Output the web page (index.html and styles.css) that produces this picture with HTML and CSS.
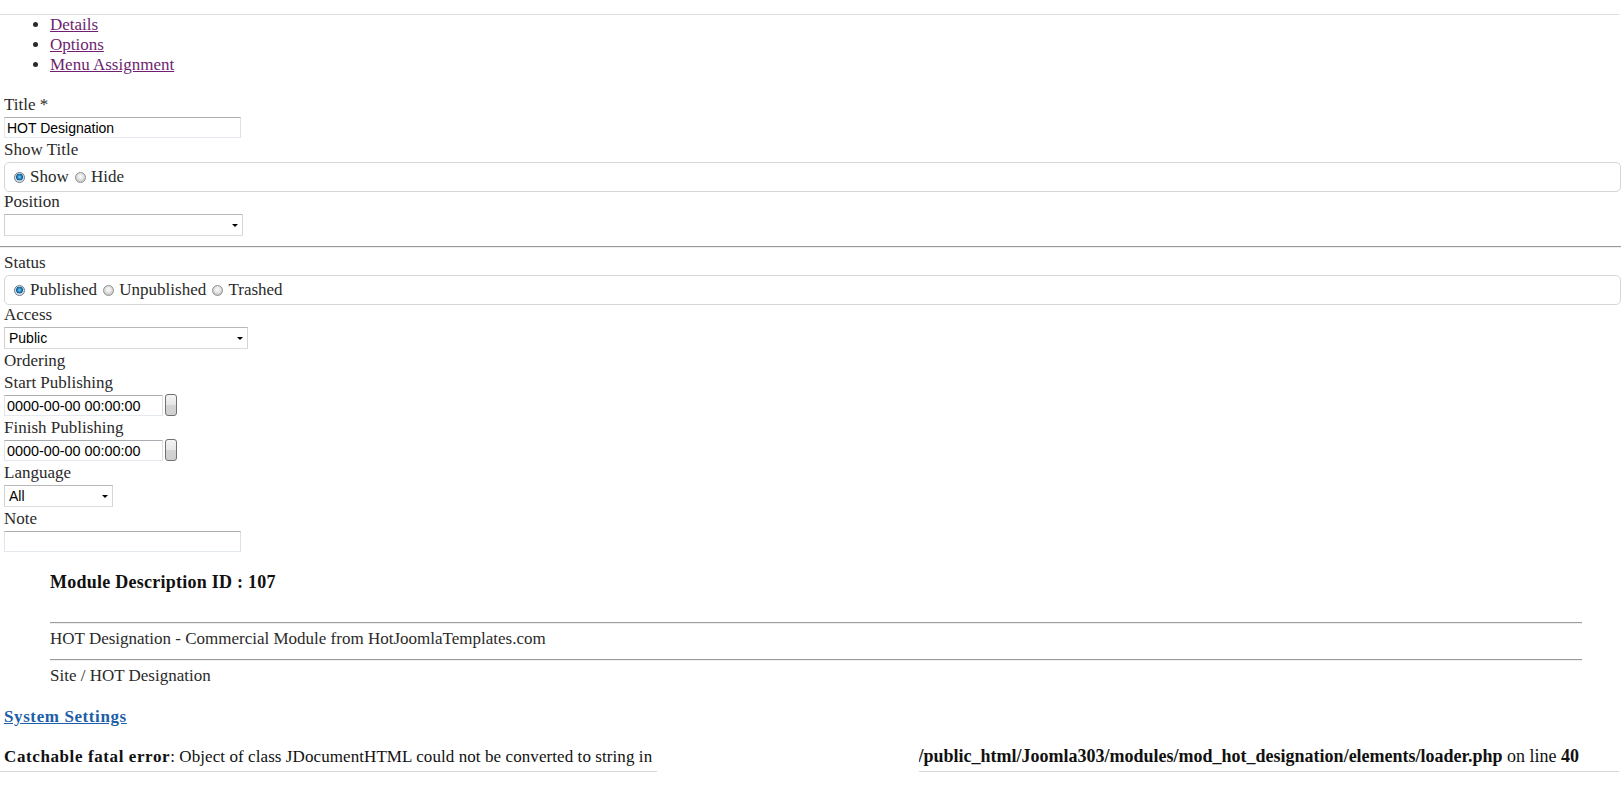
FILE: index.html
```html
<!DOCTYPE html>
<html lang="en">
<head>
    <meta charset="UTF-8">
    <title>Module Manager: Module HOT Designation</title>
    <link rel="stylesheet" href="styles.css">
</head>
<body>
    <div class="page">
        <ul class="tabs">
            <li><a href="#details">Details</a></li>
            <li><a href="#options">Options</a></li>
            <li><a href="#assignment">Menu Assignment</a></li>
        </ul>

        <div class="fields">
            <label class="field-label" for="jform_title">Title <span class="star">*</span></label>
            <input type="text" id="jform_title" class="inputbox wide" value="HOT Designation">

            <label class="field-label">Show Title</label>
            <fieldset class="radio">
                <input type="radio" name="showtitle" id="showtitle1" checked><label for="showtitle1">Show</label>
                <input type="radio" name="showtitle" id="showtitle0"><label for="showtitle0">Hide</label>
            </fieldset>

            <label class="field-label" for="jform_position">Position</label>
            <span class="select select-position">
                <select id="jform_position"><option></option></select>
            </span>

            <hr class="sep">

            <label class="field-label">Status</label>
            <fieldset class="radio">
                <input type="radio" name="published" id="published1" checked><label for="published1">Published</label>
                <input type="radio" name="published" id="published0"><label for="published0">Unpublished</label>
                <input type="radio" name="published" id="published-2"><label for="published-2">Trashed</label>
            </fieldset>

            <label class="field-label" for="jform_access">Access</label>
            <span class="select select-access">
                <select id="jform_access"><option>Public</option></select>
            </span>

            <label class="field-label">Ordering</label>

            <label class="field-label" for="jform_publish_up">Start Publishing</label>
            <div class="date-row">
                <input type="text" id="jform_publish_up" class="inputbox date" value="0000-00-00 00:00:00">
                <button type="button" class="cal-btn"></button>
            </div>

            <label class="field-label" for="jform_publish_down">Finish Publishing</label>
            <div class="date-row">
                <input type="text" id="jform_publish_down" class="inputbox date" value="0000-00-00 00:00:00">
                <button type="button" class="cal-btn"></button>
            </div>

            <label class="field-label" for="jform_language">Language</label>
            <span class="select select-language">
                <select id="jform_language"><option>All</option></select>
            </span>

            <label class="field-label" for="jform_note">Note</label>
            <input type="text" id="jform_note" class="inputbox wide" value="">
        </div>

        <div class="desc">
            <h4>Module Description ID : 107</h4>
            <hr>
            <p>HOT Designation - Commercial Module from HotJoomlaTemplates.com</p>
            <hr>
            <p>Site / HOT Designation</p>
        </div>

        <a class="settings" href="#settings">System Settings</a>

        <p class="error"><b>Catchable fatal error</b>: Object of class JDocumentHTML could not be converted to string in <span class="redacted"></span><span class="file"><b>/public_html/Joomla303/modules/mod_hot_designation/elements/loader.php</b> on line <b>40</b></span></p>
    </div>
</body>
</html>
```

FILE: styles.css
```css
* {
    box-sizing: border-box;
}

body {
    margin: 0;
    font-family: "Liberation Serif", "DejaVu Serif", serif;
    font-size: 17px;
    color: #2a2a2a;
    background: #fff;
}

.page {
    margin: 14px 2px 0 0;
    padding: 0 0 4px 4px;
    border-top: 1px solid #d9dde2;
    border-bottom: 1px solid #d4d9de;
}

/* tabs */
.tabs {
    margin: 0 0 20px;
    padding-left: 46px;
    line-height: 20px;
}

.tabs a {
    color: #6e1f70;
}

/* form fields */
.field-label {
    display: block;
    line-height: 20px;
    margin-bottom: 2px;
}

.inputbox {
    display: block;
    height: 21px;
    margin: 0 0 2px;
    padding: 2px 2px 1px;
    border: 1px solid;
    border-color: #abadb3 #dbdfe6 #e3e9ef #e2e3ea;
    font: 14px "Liberation Sans", Arial, sans-serif;
    color: #000;
    background: #fff;
}

.wide {
    width: 237px;
}

.radio {
    margin: 0 -2px 0 0;
    padding: 4px 9px;
    height: 30px;
    border: 1px solid #d6d6d6;
    border-radius: 5px;
    line-height: 20px;
}

.radio input {
    appearance: none;
    -webkit-appearance: none;
    width: 11px;
    height: 11px;
    margin: 0 5px 0 0;
    border: 1px solid #8e8f8f;
    border-radius: 50%;
    background: radial-gradient(circle at 50% 40%, #fbfbfb 0, #e4e4e4 3px, #c9c9c9 5px);
    vertical-align: -1px;
}

.radio input:checked {
    border-color: #66798a;
    background: radial-gradient(circle at 50% 45%, #8fd3f5 0, #2a8bc6 1.8px, #0d5a94 3.2px, #c8d0d6 3.6px, #eef0f2 5px);
}

.radio label + input {
    margin-left: 2px;
}

.select {
    display: block;
    position: relative;
    margin-bottom: 2px;
}

.select select {
    appearance: none;
    -webkit-appearance: none;
    width: 100%;
    height: 22px;
    margin: 0;
    padding: 0 16px 0 4px;
    border: 1px solid;
    border-color: #b8b8b8 #d6d6d6 #dcdcdc #d0d0d0;
    border-radius: 0;
    font: 14px "Liberation Sans", Arial, sans-serif;
    color: #000;
    background: #fff;
}

.select::after {
    content: "";
    position: absolute;
    right: 5px;
    top: 10px;
    border-left: 3px solid transparent;
    border-right: 3px solid transparent;
    border-top: 3px solid #000;
}

.select-position {
    width: 239px;
}

.select-access {
    width: 244px;
}

.select-language {
    width: 109px;
}

.sep {
    margin: 10px -2px 5px -4px;
    border: 0;
    border-top: 1px solid #9a9a9a;
    border-bottom: 1px solid #eee;
}

.date-row {
    display: flex;
    gap: 2px;
    margin-bottom: 2px;
}

.date-row .inputbox {
    margin: 0;
    font-size: 14.4px;
}

.date {
    width: 159px;
}

.cal-btn {
    width: 12px;
    height: 22px;
    margin: -1px 0 0;
    padding: 0;
    border: 1px solid #707070;
    border-radius: 3px;
    background: linear-gradient(#f4f4f4, #e6e6e6 50%, #d4d4d4 51%, #cfcfcf);
}

/* module description */
.desc {
    margin: 20px 37px 0 46px;
}

.desc h4 {
    margin: 0 0 30px;
    font-size: 18px;
    line-height: 20px;
    letter-spacing: 0.25px;
    color: #111;
}

.desc hr {
    margin: 0;
    border: 0;
    border-top: 1px solid #9c9c9c;
    border-bottom: 1px solid #eee;
}

.desc p {
    margin: 0;
    padding: 5px 0 10px;
    line-height: 20px;
}

.settings {
    display: inline-block;
    margin-top: 11px;
    line-height: 20px;
    font-weight: bold;
    letter-spacing: 0.6px;
    color: #1d5ea8;
}

.error {
    margin: 19px 0 0;
    line-height: 20px;
    letter-spacing: 0.08px;
    color: #111;
}

.error > b {
    letter-spacing: 0.6px;
}

.redacted {
    display: inline-block;
    position: relative;
    width: 262px;
    height: 20px;
    vertical-align: top;
}

.redacted::after {
    content: "";
    position: absolute;
    left: 0;
    right: 0;
    top: 0;
    bottom: -10px;
    background: #fff;
}

.file {
    font-size: 18px;
    letter-spacing: 0;
}
```
